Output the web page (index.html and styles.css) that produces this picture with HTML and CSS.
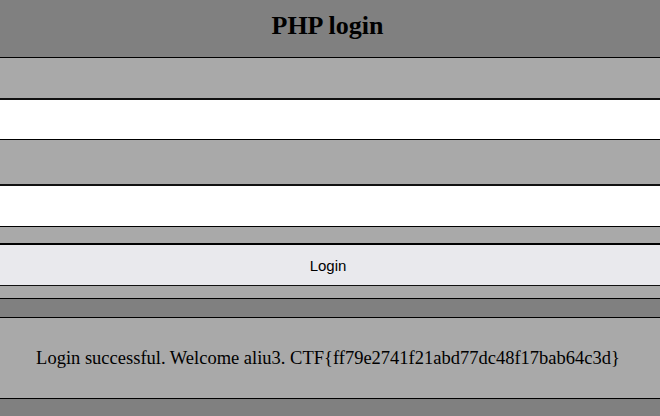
FILE: index.html
```html
<!DOCTYPE html>
<html lang="en">
  <head>
    <meta charset="UTF-8" />
    <meta name="viewport" content="width=device-width, initial-scale=1.0" />
    <title>PHP login</title>
    <link rel="stylesheet" href="styles.css">
  </head>
  <body>
    <header class="top">
      <h1>PHP login</h1>
    </header>

    <form class="login-form" method="post" action="">
      <input type="text" name="username" class="field" />
      <input type="password" name="password" class="field field-second" />
      <button type="submit" class="login-btn">Login</button>
    </form>

    <div class="message">
      Login successful. Welcome aliu3. CTF{ff79e2741f21abd77dc48f17bab64c3d}
    </div>
  </body>
</html>
```

FILE: styles.css
```css
html,
body {
  margin: 0;
  padding: 0;
}
body {
  background-color: #808080;
  font-family: "Liberation Serif", "Times New Roman", serif;
  color: #000;
  height: 416px;
  overflow: hidden;
}
.top {
  height: 57px;
  display: flex;
  align-items: center;
  justify-content: center;
  padding-right: 5px;
}
.top h1 {
  margin: 0;
  font-size: 26px;
  font-weight: bold;
  line-height: 1;
  padding-bottom: 5px;
}
.login-form {
  display: flex;
  flex-direction: column;
  background-color: #a9a9a9;
  border-top: 1px solid #000;
  border-bottom: 1px solid #000;
  padding: 40px 0 12px;
  margin-bottom: 18px;
}
.field {
  display: block;
  box-sizing: border-box;
  width: 100%;
  height: 42px;
  margin: 0;
  padding: 0 6px;
  border: none;
  border-top: 2px solid #111;
  border-bottom: 1px solid #000;
  background-color: #fff;
  font-family: "Liberation Sans", Arial, sans-serif;
  font-size: 14px;
}
.field-second {
  margin-top: 44px;
  height: 43px;
}
.login-btn {
  display: block;
  box-sizing: border-box;
  width: 100%;
  height: 43px;
  margin: 16px 0 0;
  border: none;
  border-top: 2px solid #000;
  border-bottom: 1px solid #111;
  background-color: #e9e9ed;
  color: #000;
  font-family: "Liberation Sans", Arial, sans-serif;
  font-size: 15px;
  padding: 0 4px 0 0;
}
.message {
  box-sizing: border-box;
  height: 82px;
  background-color: #a9a9a9;
  border-top: 1px solid #000;
  border-bottom: 1px solid #000;
  display: flex;
  align-items: center;
  justify-content: center;
  font-size: 18.5px;
  padding: 1px 4px 0 0;
}
```
